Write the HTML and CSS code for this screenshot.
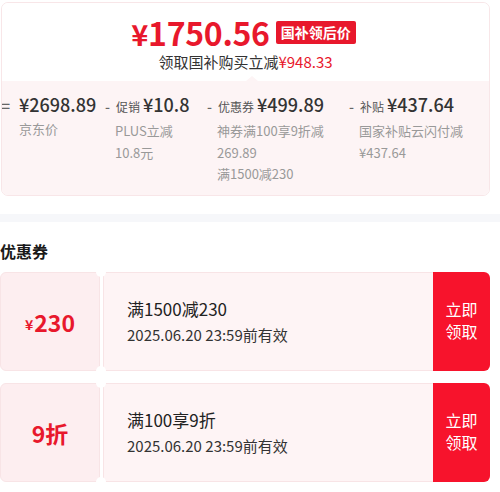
FILE: index.html
```html
<!DOCTYPE html>
<html lang="zh-CN">
<head>
    <meta charset="UTF-8">
    <meta name="viewport" content="width=device-width, initial-scale=1.0">
    <title>国补领后价</title>
    <link rel="stylesheet" href="styles.css">
</head>
<body>
    <div class="page">
        <div class="price-card">
            <div class="price-top">
                <div class="price-line">
                    <span class="price"><span class="yen">¥</span>1750.56</span>
                    <span class="price-tag">国补领后价</span>
                </div>
                <div class="price-sub">领取国补购买立减<span class="red">¥948.33</span></div>
            </div>
            <div class="breakdown">
                <div class="item item-1">
                    <div class="amount"><span class="op">=</span>¥2698.89</div>
                    <div class="desc">京东价</div>
                </div>
                <div class="item item-2">
                    <div class="amount"><span class="op">-</span><span class="label">促销</span>¥10.8</div>
                    <div class="desc">PLUS立减<br>10.8元</div>
                </div>
                <div class="item item-3">
                    <div class="amount"><span class="op">-</span><span class="label">优惠券</span>¥499.89</div>
                    <div class="desc">神券满100享9折减<br>269.89<br>满1500减230</div>
                </div>
                <div class="item item-4">
                    <div class="amount"><span class="op">-</span><span class="label">补贴</span>¥437.64</div>
                    <div class="desc">国家补贴云闪付减<br>¥437.64</div>
                </div>
            </div>
        </div>

        <div class="divider"></div>

        <h2 class="section-title">优惠券</h2>

        <div class="coupon">
            <div class="coupon-value"><span class="small-yen">¥</span>230</div>
            <div class="coupon-info">
                <div class="coupon-name">满1500减230</div>
                <div class="coupon-date">2025.06.20 23:59前有效</div>
            </div>
            <button class="coupon-btn" type="button">立即<br>领取</button>
        </div>

        <div class="coupon">
            <div class="coupon-value">9折</div>
            <div class="coupon-info">
                <div class="coupon-name">满100享9折</div>
                <div class="coupon-date">2025.06.20 23:59前有效</div>
            </div>
            <button class="coupon-btn" type="button">立即<br>领取</button>
        </div>
    </div>
</body>
</html>
```

FILE: styles.css
```css
body {
    margin: 0;
    background: #fff;
    font-family: "Noto Sans CJK SC", "Noto Sans", sans-serif;
    color: #333;
}
.page {
    width: 490px;
    padding-top: 2px;
}
.price-card {
    margin-left: 1px;
    border: 1px solid #f8e6e8;
    border-radius: 7px;
    overflow: hidden;
    height: 194px;
    box-sizing: border-box;
}
.price-top {
    height: 78px;
    background: #fff;
    text-align: center;
    position: relative;
}
.price-top::after {
    content: "";
    position: absolute;
    left: 244px;
    bottom: 0;
    border-left: 6px solid transparent;
    border-right: 6px solid transparent;
    border-bottom: 5px solid #fdf4f5;
}
.price-line {
    display: flex;
    justify-content: center;
    align-items: center;
    gap: 6px;
    padding-top: 10px;
    padding-right: 4px;
    height: 38px;
}
.price {
    color: #e8182c;
    font-size: 32px;
    font-weight: 700;
    line-height: 38px;
    letter-spacing: -0.3px;
}
.yen {
    font-size: 29px;
}
.price-tag {
    background: #e8182c;
    color: #fff;
    font-size: 14px;
    font-weight: 700;
    line-height: 23px;
    padding: 0 5px;
    border-radius: 2px;
}
.price-sub {
    font-size: 15px;
    color: #333;
    line-height: 20px;
    margin-top: 1px;
}
.red {
    color: #e8182c;
}
.breakdown {
    background: #fdf4f5;
    height: 116px;
    display: flex;
    padding-top: 11px;
    box-sizing: border-box;
}
.item {
    flex: none;
}
.item-1 { width: 102px; }
.item-2 { width: 102px; }
.item-3 { width: 142px; }
.amount {
    font-size: 18px;
    font-weight: 500;
    color: #333;
    line-height: 24px;
    white-space: nowrap;
}
.op {
    display: inline-block;
    width: 11px;
    font-size: 14px;
    color: #666;
    margin-left: 1px;
}
.item-1 .op {
    margin-left: -1px;
    width: 18px;
    font-size: 16px;
}
.label {
    font-size: 12px;
    color: #555;
    margin-right: 3px;
    font-weight: 400;
}
.desc {
    font-size: 13px;
    color: #999;
    line-height: 21.5px;
    padding-left: 11px;
    margin-top: 1px;
}
.item-1 .desc {
    padding-left: 17px;
}
.divider {
    height: 8px;
    background: #f6f7fa;
    margin-top: 18px;
    width: 500px;
}
.section-title {
    font-size: 16px;
    font-weight: 700;
    color: #1a1a1a;
    margin: 0;
    padding: 18px 0 0;
    line-height: 22px;
}
.coupon {
    display: flex;
    height: 99px;
    margin-top: 10px;
    position: relative;
}
.coupon + .coupon {
    margin-top: 12px;
}
.coupon::before,
.coupon::after {
    content: "";
    position: absolute;
    left: 96px;
    width: 10px;
    height: 10px;
    background: #fff;
    border-radius: 50%;
}
.coupon::before {
    top: -5px;
}
.coupon::after {
    bottom: -5px;
}
.coupon-value {
    width: 98px;
    flex: none;
    background: #fdeef0;
    border: 1px solid #f8e4e6;
    border-radius: 6px 0 0 6px;
    display: flex;
    justify-content: center;
    align-items: center;
    color: #e8182c;
    font-size: 23px;
    font-weight: 700;
}
.small-yen {
    font-size: 14px;
    margin-right: 1px;
    margin-top: 4px;
}
.coupon-info {
    flex: 1;
    margin-left: 3px;
    background: #fef4f5;
    border: 1px solid #f8e4e6;
    border-right: none;
    padding: 23px 0 0 23px;
}
.coupon-name {
    font-size: 17px;
    color: #222;
    line-height: 25px;
}
.coupon-date {
    font-size: 15px;
    color: #333;
    line-height: 22px;
    margin-top: 3px;
}
.coupon-btn {
    width: 57px;
    flex: none;
    border: none;
    background: #f7132c;
    color: #fff;
    font-family: inherit;
    font-size: 16px;
    line-height: 22px;
    border-radius: 0 6px 6px 0;
    padding: 0 0 4px;
}
```
